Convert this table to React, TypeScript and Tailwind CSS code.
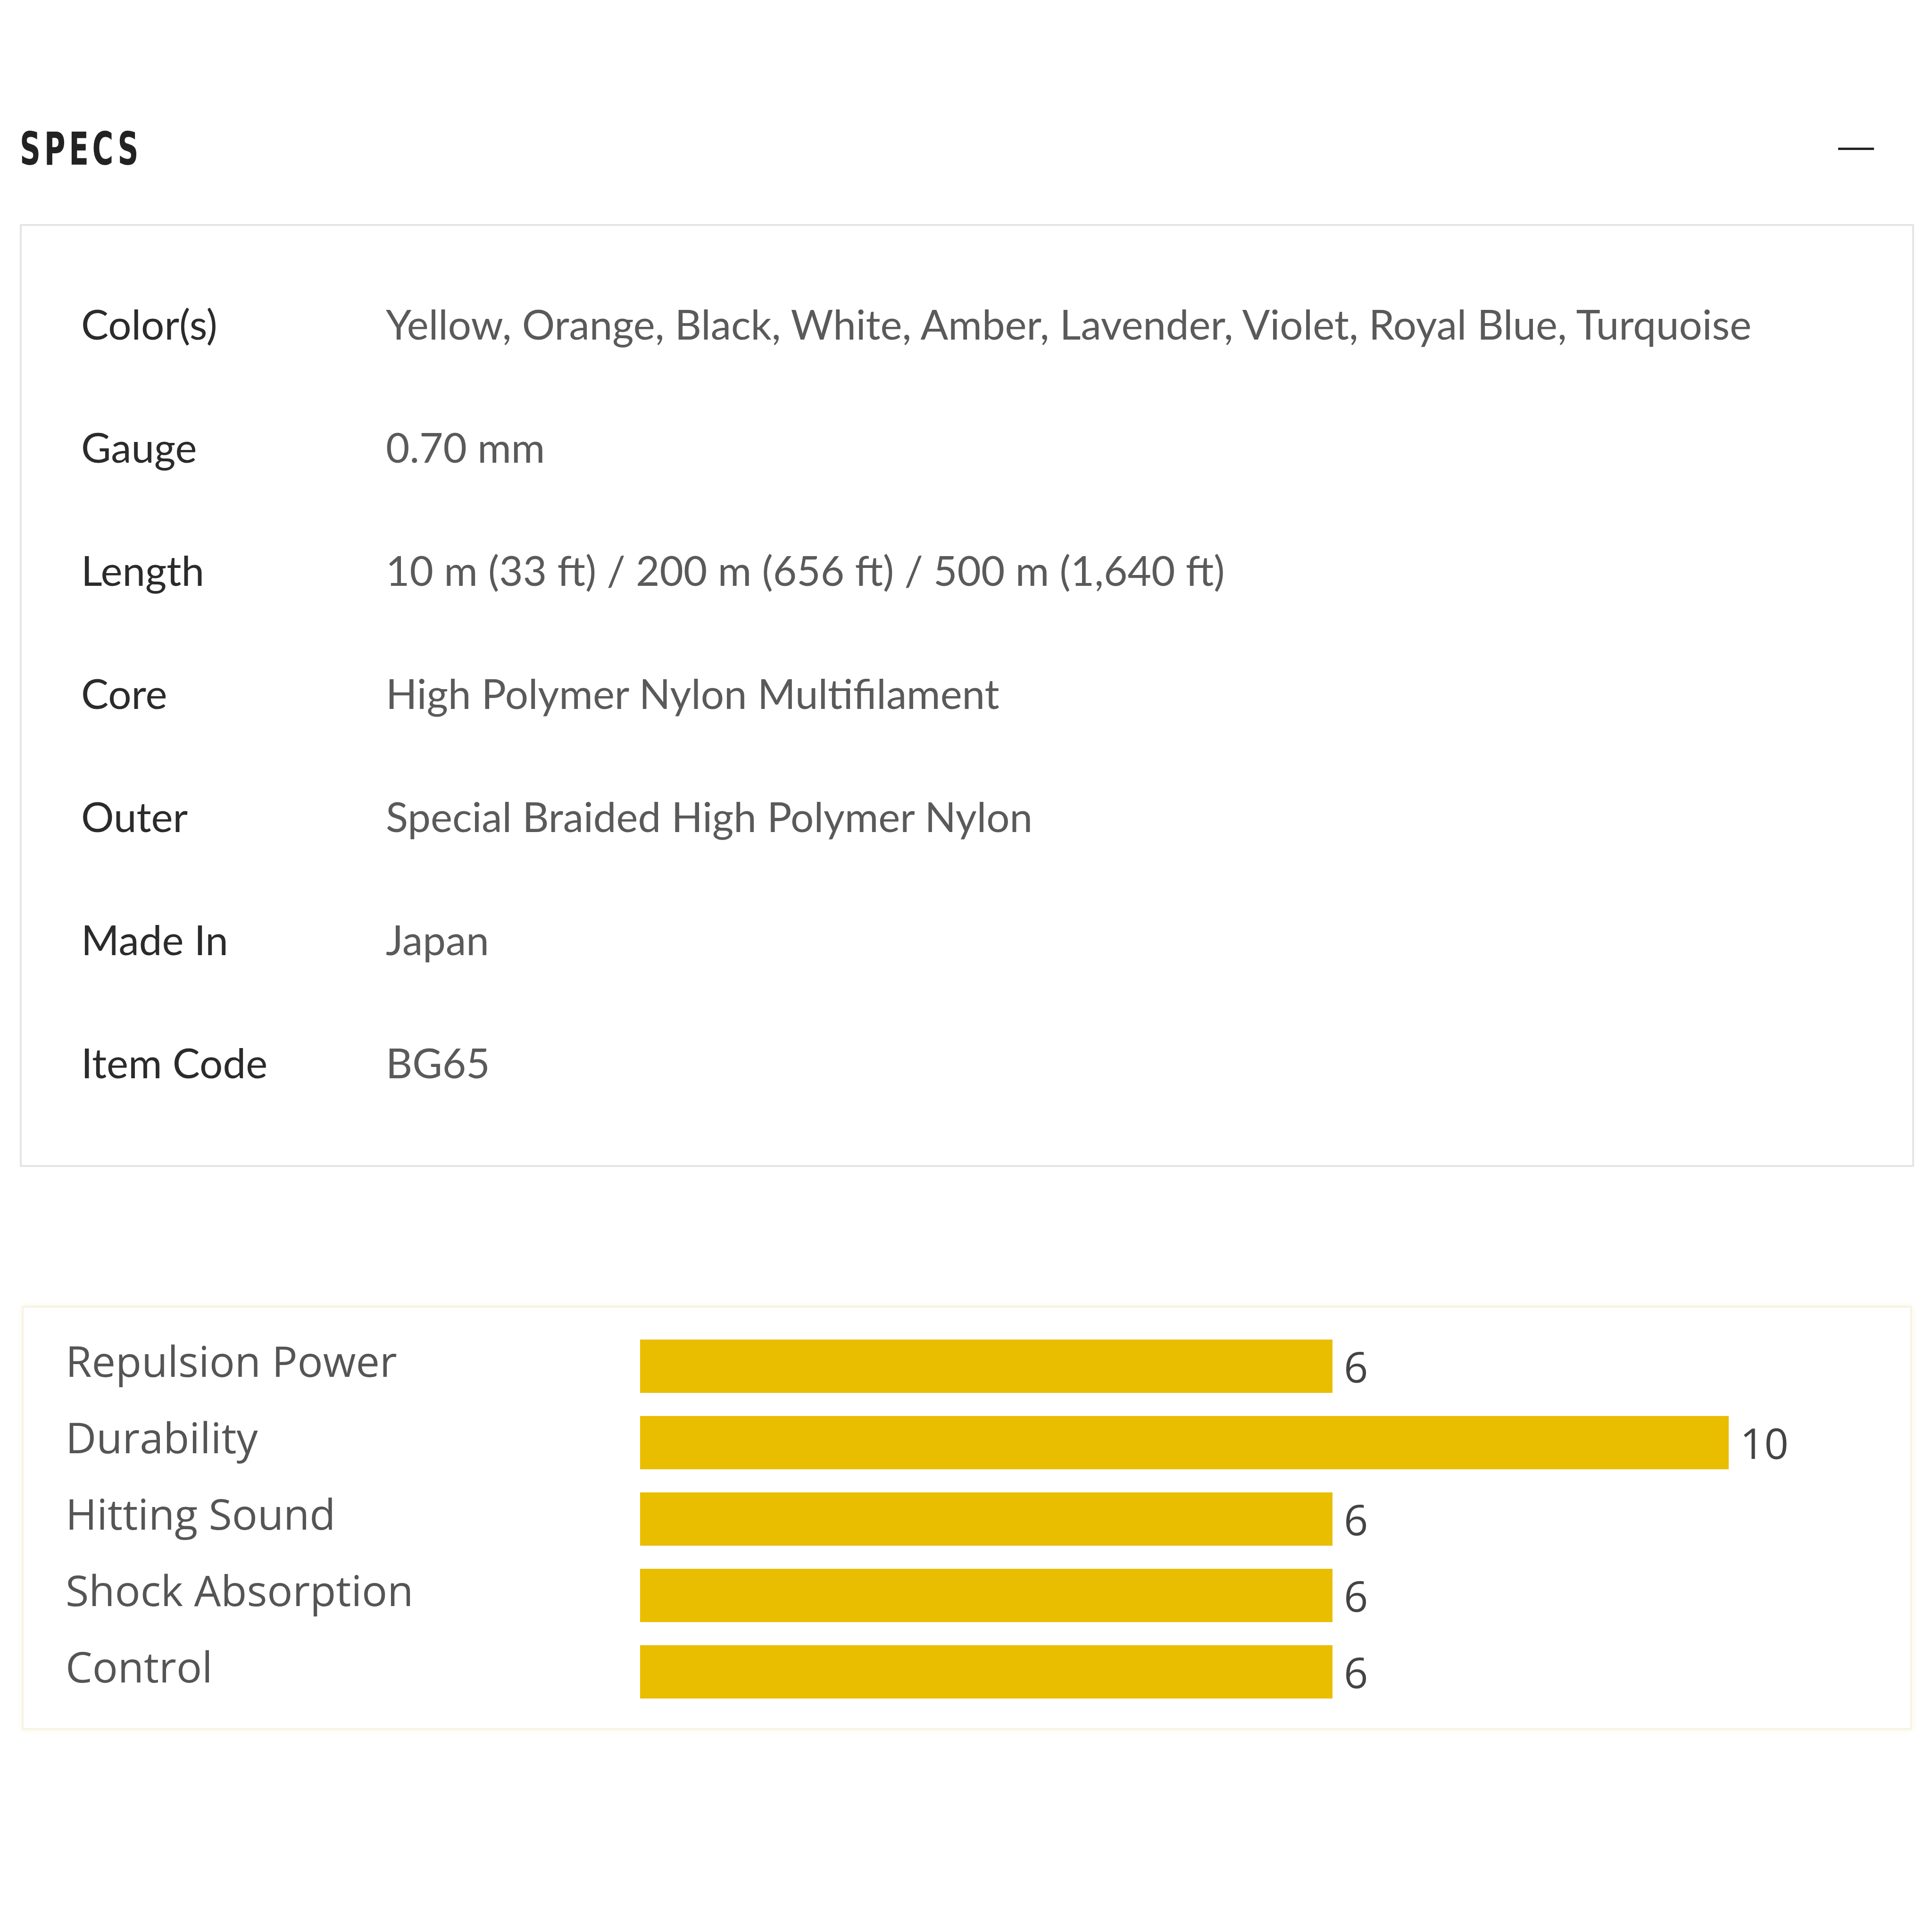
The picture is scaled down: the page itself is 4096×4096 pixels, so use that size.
const specs = [
  { label: 'Color(s)', value: 'Yellow, Orange, Black, White, Amber, Lavender, Violet, Royal Blue, Turquoise' },
  { label: 'Gauge', value: '0.70 mm' },
  { label: 'Length', value: '10 m (33 ft) / 200 m (656 ft) / 500 m (1,640 ft)' },
  { label: 'Core', value: 'High Polymer Nylon Multifilament' },
  { label: 'Outer', value: 'Special Braided High Polymer Nylon' },
  { label: 'Made In', value: 'Japan' },
  { label: 'Item Code', value: 'BG65' }
]

// bar widths are read off the chart: 6 -> 1468px, 10 -> 2308px
const ratings = [
  { label: 'Repulsion Power', value: 6, width: 1468 },
  { label: 'Durability', value: 10, width: 2308 },
  { label: 'Hitting Sound', value: 6, width: 1468 },
  { label: 'Shock Absorption', value: 6, width: 1468 },
  { label: 'Control', value: 6, width: 1468 }
]

const SpecRow = ({ label, value }: { label: string; value: string }) => (
  <div className="flex items-center h-[261px]">
    <div className="w-[646px] shrink-0 text-[#2b2b2b]">{label}</div>
    <div className="text-[#5a5a5a]">{value}</div>
  </div>
)

const RatingRow = ({
  label,
  value,
  width
}: {
  label: string
  value: number
  width: number
}) => (
  <div className="flex items-center h-[113px]">
    <div className="w-[1218px] shrink-0 -translate-y-[12px] text-[#555]">
      {label}
    </div>
    <div className="h-full bg-[#e9bd00]" style={{ width: `${width}px` }} />
    <div className="pl-[24px] text-[#444]">{value}</div>
  </div>
)

export default function App() {
  return (
    <div className="w-[4096px] h-[4096px] bg-white pl-[42px] pr-[38px] pt-[240px]">
      <div className="flex items-center justify-between h-[150px] pr-[85px]">
        <h2 className="origin-left scale-x-[0.7] text-[97px] font-bold tracking-[11px] text-[#222] font-['DejaVu_Sans_Condensed','DejaVu_Sans',sans-serif] leading-none">
          SPECS
        </h2>
        <div className="w-[76px] h-[5px] bg-[#222]" />
      </div>

      <div className="mt-[85px] border-4 border-[#e4e4e4] pl-[126px] pt-[78px] pb-[86px] text-[87px] font-['Lato',sans-serif]">
        {specs.map((s) => (
          <SpecRow key={s.label} {...s} />
        ))}
      </div>

      <div className="mt-[295px] mx-[5px] border-[3px] border-[#f5f2de] shadow-[0_0_12px_rgba(240,235,200,0.6)] pl-[89px] pt-[68px] pb-[63px] flex flex-col gap-[49px] text-[90px] font-['Open_Sans',sans-serif]">
        {ratings.map((r) => (
          <RatingRow key={r.label} {...r} />
        ))}
      </div>
    </div>
  )
}
